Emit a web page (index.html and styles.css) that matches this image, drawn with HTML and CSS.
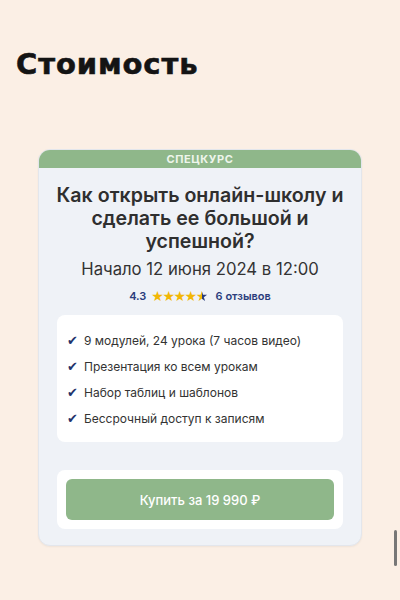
FILE: index.html
```html
<!DOCTYPE html>
<html lang="ru">
<head>
<meta charset="utf-8">
<link rel="stylesheet" href="styles.css">
</head>
<body>
<div class="page">
  <h1 class="heading">Стоимость</h1>
  <div class="card">
    <div class="card-tag">СПЕЦКУРС</div>
    <div class="card-body">
      <h2 class="title">Как открыть онлайн-школу и сделать ее большой и успешной?</h2>
      <div class="date">Начало 12 июня 2024 в 12:00</div>
      <div class="rating">
        <span class="score">4.3</span>
        <span class="stars"><span class="full">★★★★</span><span class="half">★</span></span>
        <span class="reviews">6 отзывов</span>
      </div>
      <ul class="features">
        <li><span class="check">✔</span>9 модулей, 24 урока (7 часов видео)</li>
        <li><span class="check">✔</span>Презентация ко всем урокам</li>
        <li><span class="check">✔</span>Набор таблиц и шаблонов</li>
        <li><span class="check">✔</span>Бессрочный доступ к записям</li>
      </ul>
      <div class="buy-box">
        <button class="buy">Купить за 19 990 ₽</button>
      </div>
    </div>
  </div>
  <div class="scrollbar"></div>
</div>
</body>
</html>
```

FILE: styles.css
```css
html, body {
  margin: 0;
  padding: 0;
  background: #fbefe5;
}
.page {
  position: relative;
  width: 400px;
  height: 600px;
  overflow: hidden;
  padding: 49px 0 0 0;
  box-sizing: border-box;
  font-family: "Inter", "Liberation Sans", sans-serif;
}
.heading {
  margin: 0 0 0 16px;
  font-family: "DejaVu Sans", sans-serif;
  font-weight: 700;
  font-size: 29px;
  line-height: 30px;
  color: #141414;
  letter-spacing: 0.9px;
  -webkit-text-stroke: 0.6px #141414;
}
.card {
  margin: 70px 38px 0 38px;
  border-radius: 12px;
  overflow: hidden;
  background: #eff2f7;
  border: 1px solid #e3e6ec;
  box-shadow: 0 1px 2px rgba(0,0,0,0.05);
}
.card-tag {
  height: 18px;
  background: #8fb78a;
  color: #eef5ec;
  font-size: 11px;
  font-weight: 700;
  letter-spacing: 0.6px;
  text-align: center;
  line-height: 18px;
}
.card-body {
  padding: 16px 18px 16px 18px;
  display: flex;
  flex-direction: column;
  align-items: stretch;
}
.title {
  margin: 0 -10px;
  text-align: center;
  font-size: 19.6px;
  line-height: 23px;
  font-weight: 600;
  color: #2f2f2f;
}
.date {
  margin-top: 6px;
  text-align: center;
  font-size: 16.7px;
  line-height: 20px;
  color: #333;
}
.rating {
  margin-top: 9px;
  display: flex;
  justify-content: center;
  align-items: center;
  gap: 5px;
  font-size: 11px;
  font-weight: 600;
  color: #2b3d7c;
  line-height: 16px;
  height: 16px;
}
.stars {
  font-family: "DejaVu Sans", sans-serif;
  font-size: 14px;
  line-height: 16px;
  color: #f2b705;
  letter-spacing: -1.5px;
  display: inline-flex;
}
.half {
  background: linear-gradient(90deg, #f2b705 0, #f2b705 6px, #2b3d7c 6px, #2b3d7c 100%);
  -webkit-background-clip: text;
  background-clip: text;
  color: transparent;
}
.reviews {
  margin-left: 4px;
}
.features {
  list-style: none;
  margin: 11px 0 0 0;
  padding: 18px 10px 15px 10px;
  background: #ffffff;
  border-radius: 8px;
  display: flex;
  flex-direction: column;
  gap: 10px;
}
.features li {
  display: flex;
  align-items: center;
  font-size: 12px;
  line-height: 16px;
  color: #333;
}
.check {
  color: #22326b;
  font-family: "DejaVu Sans", sans-serif;
  font-size: 13px;
  width: 17px;
}
.buy-box {
  margin-top: 28px;
  background: #ffffff;
  border-radius: 8px;
  padding: 9px 9px 9px 9px;
}
.buy {
  display: block;
  width: 100%;
  height: 41px;
  border: none;
  border-radius: 6px;
  background: #8fb78a;
  color: #ffffff;
  font-family: "Inter", "Liberation Sans", sans-serif;
  font-size: 13px;
  font-weight: 500;
}
.scrollbar {
  position: absolute;
  left: 394px;
  top: 530px;
  width: 3px;
  height: 36px;
  border-radius: 2px;
  background: #777;
}
```
